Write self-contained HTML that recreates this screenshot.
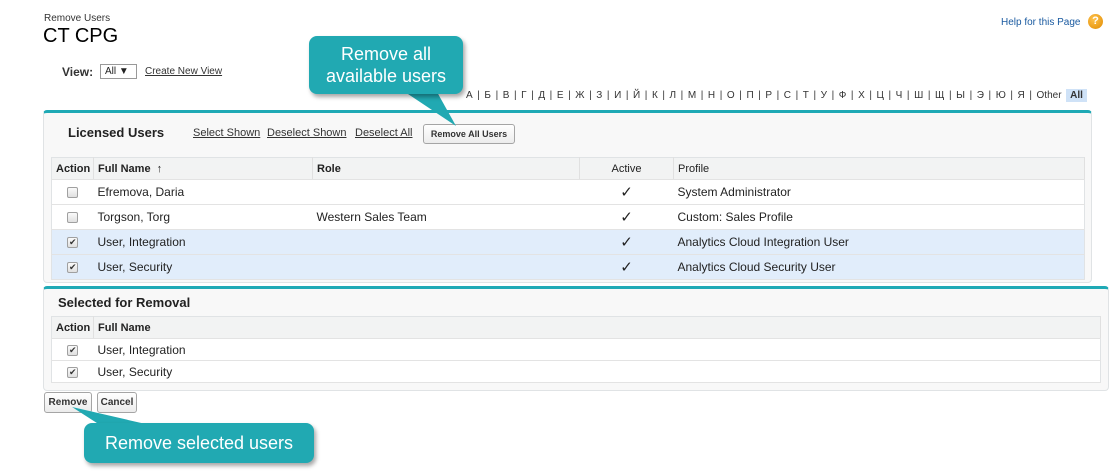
<!DOCTYPE html>
<html><head><meta charset="utf-8"><style>
*{box-sizing:border-box;margin:0;padding:0}
body{width:1117px;height:472px;background:#fff;font-family:"Liberation Sans",Arial,sans-serif;font-size:12px;color:#222;position:relative;overflow:hidden}
.a{position:absolute;white-space:nowrap}
u{text-decoration:underline}
.panel{position:absolute;background:#f8f8f8;border:1px solid #e0e3e5;border-top:3px solid #1fa9b5;border-radius:4px}
table{position:absolute;border-collapse:collapse;background:#fff;border:1px solid #e0e3e5;table-layout:fixed}
td,th{border-bottom:1px solid #e3e3e3;padding:0 4px;text-align:left;font-size:12px;height:25px;overflow:hidden;white-space:nowrap}
th{background:#f2f3f3;font-weight:bold;color:#222;border-right:1px solid #e0e0e0;height:22px;font-size:11px}
tr.sel td{background:#e1edfb}
.cb{display:inline-block;width:11px;height:11px;border:1px solid #a0a0a0;border-radius:2px;background:linear-gradient(#fafafa,#e0e0e0);vertical-align:middle;position:relative;font-size:9px;line-height:9px;text-align:center;color:#333}
.btn{position:absolute;border:1px solid #a5a5a5;border-radius:3px;background:linear-gradient(#fff,#ececec);font-size:10px;font-weight:bold;color:#333;text-align:center}
.call{position:absolute;background:#21a9b2;color:#fff;border-radius:8px;font-size:18px;text-align:center;box-shadow:2px 3px 4px rgba(0,0,0,.35)}
</style></head><body>
<div class="a" style="left:44px;top:13px;font-size:10px;color:#333">Remove Users</div>
<div class="a" style="left:43px;top:25px;font-size:20px;color:#000">CT CPG</div>
<div class="a" style="left:1001px;top:17px;font-size:10px;color:#1a5aa0">Help for this Page</div>
<div class="a" style="left:1088px;top:14px;width:15px;height:15px;border-radius:50%;background:radial-gradient(circle at 40% 35%,#ffc34d,#e08a00);color:#fff;font-weight:bold;font-size:11px;text-align:center;line-height:15px">?</div>
<div class="a" style="left:62px;top:65px;font-weight:bold;font-size:12px;color:#333">View:</div>
<div class="a" style="left:100px;top:64px;width:37px;height:15px;border:1px solid #999;font-size:10px;padding-left:4px;line-height:13px">All ▼</div>
<div class="a" style="left:145px;top:66px;font-size:10px;color:#333"><u>Create New View</u></div>
<div class="a" style="left:466px;top:90px;font-size:10px;color:#333;word-spacing:1.8px">А | Б | В | Г | Д | Е | Ж | З | И | Й | К | Л | М | Н | О | П | Р | С | Т | У | Ф | Х | Ц | Ч | Ш | Щ | Ы | Э | Ю | Я | Other <span style="background:#cfe2f7;font-weight:bold;padding:1px 4px">All</span></div>

<div class="panel" style="left:43px;top:110px;width:1049px;height:173px"></div>
<div class="a" style="left:68px;top:125px;font-size:13px;font-weight:bold;color:#222">Licensed Users</div>
<div class="a" style="left:193px;top:127px;font-size:11px;color:#333"><u>Select Shown</u></div>
<div class="a" style="left:267px;top:127px;font-size:11px;color:#333"><u>Deselect Shown</u></div>
<div class="a" style="left:355px;top:127px;font-size:11px;color:#333"><u>Deselect All</u></div>
<div class="btn" style="left:423px;top:124px;width:92px;height:20px;line-height:18px;font-size:9px">Remove All Users</div>
<table style="left:51px;top:157px;width:1034px">
<colgroup><col style="width:42px"><col style="width:219px"><col style="width:267px"><col style="width:94px"><col></colgroup>
<tr><th>Action</th><th>Full Name &nbsp;↑</th><th>Role</th><th style="text-align:center;font-weight:normal">Active</th><th style="font-weight:normal">Profile</th></tr>
<tr><td style="text-align:center"><span class="cb"></span></td><td>Efremova, Daria</td><td></td><td style="text-align:center;font-size:15px">✓</td><td>System Administrator</td></tr>
<tr><td style="text-align:center"><span class="cb"></span></td><td>Torgson, Torg</td><td>Western Sales Team</td><td style="text-align:center;font-size:15px">✓</td><td>Custom: Sales Profile</td></tr>
<tr class="sel"><td style="text-align:center"><span class="cb">✔</span></td><td>User, Integration</td><td></td><td style="text-align:center;font-size:15px">✓</td><td>Analytics Cloud Integration User</td></tr>
<tr class="sel"><td style="text-align:center"><span class="cb">✔</span></td><td>User, Security</td><td></td><td style="text-align:center;font-size:15px">✓</td><td>Analytics Cloud Security User</td></tr>
</table>

<div class="panel" style="left:43px;top:286px;width:1066px;height:105px"></div>
<div class="a" style="left:58px;top:295px;font-size:13px;font-weight:bold;color:#222">Selected for Removal</div>
<table style="left:51px;top:316px;width:1050px">
<colgroup><col style="width:42px"><col></colgroup>
<tr><th>Action</th><th>Full Name</th></tr>
<tr><td style="text-align:center;height:22px"><span class="cb">✔</span></td><td style="height:22px">User, Integration</td></tr>
<tr><td style="text-align:center;height:22px"><span class="cb">✔</span></td><td style="height:22px">User, Security</td></tr>
</table>
<div class="btn" style="left:44px;top:392px;width:48px;height:21px;line-height:19px">Remove</div>
<div class="btn" style="left:97px;top:392px;width:40px;height:21px;line-height:19px">Cancel</div>

<svg class="a" style="left:0;top:0" width="1117" height="472">
<polygon points="405,92 437,92 456,126" fill="#21a9b2"/>
<polygon points="100,425 150,425 72,407" fill="#21a9b2"/>
</svg>
<div class="call" style="left:309px;top:36px;width:154px;height:58px;line-height:22px;padding-top:7px">Remove all<br>available users</div>
<div class="call" style="left:84px;top:423px;width:230px;height:40px;line-height:40px">Remove selected users</div>
</body></html>
